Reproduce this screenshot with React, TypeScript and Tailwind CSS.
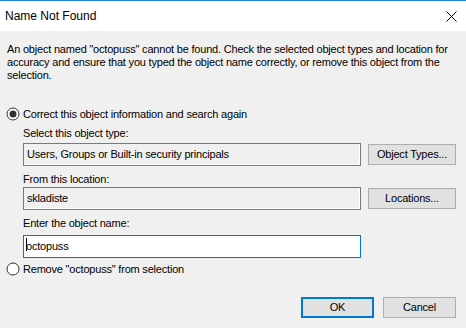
import React from "react";

const font = { fontFamily: '"Liberation Sans", Arial, sans-serif' };

function Radio({ checked }: { checked?: boolean }) {
  return (
    <svg width="14" height="14" viewBox="0 0 14 14" className="shrink-0">
      <circle cx="7" cy="7" r="6" fill="#fff" stroke="#333" strokeWidth="1" />
      {checked && <circle cx="7" cy="7" r="3.5" fill="#333" />}
    </svg>
  );
}

function ReadBox({ text }: { text: string }) {
  return (
    <div className="w-[338px] h-[23px] border border-[#7a7a7a] bg-[#f0f0f0] shadow-[inset_-1px_-1px_0_#ffffff] flex items-center pl-[3px] text-[11px] tracking-[-0.2px] text-black">
      {text}
    </div>
  );
}

function Btn({ label, primary, w }: { label: string; primary?: boolean; w: string }) {
  return (
    <div
      className={
        "h-[21px] flex items-center justify-center bg-[#e1e1e1] text-[11px] tracking-[-0.2px] text-black " +
        w +
        (primary ? " border-2 border-[#0078d7]" : " border border-[#adadad]")
      }
    >
      {label}
    </div>
  );
}

export default function App() {
  return (
    <div style={font} className="w-[466px] h-[328px] bg-[#f0f0f0] border-t border-[#1883d7] overflow-hidden text-black">
      <div className="h-[30px] bg-white flex items-center justify-between pl-[5px] pr-[9px]">
        <span className="text-[12px]">Name Not Found</span>
        <svg width="11" height="11" viewBox="0 0 11 11">
          <path d="M0.5 0.5 L10.5 10.5 M10.5 0.5 L0.5 10.5" stroke="#000" strokeWidth="1" />
        </svg>
      </div>
      <div className="pl-[7px] pt-[12px] text-[11px] leading-[13px] tracking-[-0.2px]">
        <div>An object named "octopuss" cannot be found. Check the selected object types and location for</div>
        <div>accuracy and ensure that you typed the object name correctly, or remove this object from the</div>
        <div>selection.</div>
      </div>
      <div className="text-[11px] tracking-[-0.2px]">
        <div className="mt-[24px] h-[16px] flex items-center pl-[6px] gap-[3px]">
          <Radio checked />
          <span>Correct this object information and search again</span>
        </div>
        <div className="pl-[23px]">
          <div className="mt-[4px] h-[14px] flex items-center">Select this object type:</div>
          <div className="mt-[3px] flex items-center gap-[7px]">
            <ReadBox text="Users, Groups or Built-in security principals" />
            <Btn label="Object Types..." w="w-[88px]" />
          </div>
          <div className="mt-[6px] h-[14px] flex items-center">From this location:</div>
          <div className="mt-[1px] flex items-center gap-[7px]">
            <ReadBox text="skladiste" />
            <Btn label="Locations..." w="w-[88px]" />
          </div>
          <div className="mt-[6px] h-[14px] flex items-center">Enter the object name:</div>
          <div className="mt-[5px] w-[338px] h-[23px] border border-[#0078d7] bg-white flex items-center pl-[2px]">
            <span className="relative">
              <span className="absolute left-0 top-[0px] w-px h-[13px] bg-black" />
              octopuss
            </span>
          </div>
        </div>
        <div className="mt-[3px] h-[16px] flex items-center pl-[6px] gap-[3px]">
          <Radio />
          <span>Remove "octopuss" from selection</span>
        </div>
        <div className="mt-[20px] flex justify-end gap-[9px] pr-[10px]">
          <Btn label="OK" primary w="w-[73px]" />
          <Btn label="Cancel" w="w-[73px]" />
        </div>
      </div>
    </div>
  );
}
